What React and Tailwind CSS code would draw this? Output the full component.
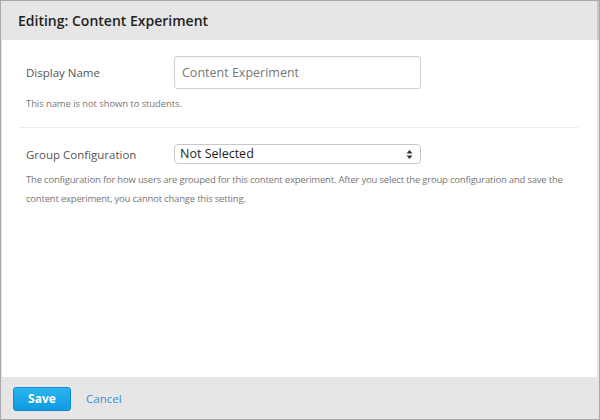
import React from "react"

export default function App() {
    return (
        <div
            className="w-[600px] h-[420px] border border-[#a8a8a8] bg-[#e6e6e6] flex flex-col text-[#555]"
            style={{ fontFamily: '"Open Sans", "Liberation Sans", sans-serif' }}
        >
            {/* Header */}
            <div className="h-[39px] flex items-center px-[17px] border-r-[2px] border-[#c8c8c8]">
                <h2 className="text-[14px] font-semibold text-[#222]">Editing: Content Experiment</h2>
            </div>

            {/* Body */}
            <div className="flex-1 bg-white ml-px mr-[2px] px-[17px] pt-[16px]">
                <div className="px-[7px]">
                    <div className="flex items-center">
                        <label className="w-[148px] text-[11.5px] text-[#555]">Display Name</label>
                        <input
                            readOnly
                            value="Content Experiment"
                            className="w-[247px] h-[33px] rounded-[3px] border border-[#d0d0d0] px-[7px] text-[12.5px] text-[#777] shadow-[inset_0_1px_2px_rgba(0,0,0,0.06)] outline-none"
                            style={{ fontFamily: '"Open Sans", "Liberation Sans", sans-serif' }}
                        />
                    </div>
                    <p className="mt-[8px] text-[9.5px] tracking-[-0.1px] text-[#777]">This name is not shown to students.</p>
                </div>

                <div className="mt-[16px] h-px bg-[#ececec] mr-[2px]" />

                <div className="px-[7px] pt-[16px]">
                    <div className="flex items-center">
                        <label className="w-[148px] text-[11.5px] text-[#555]">Group Configuration</label>
                        <div className="w-[247px] h-[20px] rounded-[4px] border border-[#c8c8c8] flex items-center justify-between pl-[5px] pr-[7px] bg-white">
                            <span className="text-[12.5px] text-[#222]">Not Selected</span>
                            <svg width="7" height="11" viewBox="0 0 7 11">
                                <path d="M3.5 1 L6.5 4.5 H0.5 Z" fill="#333" />
                                <path d="M3.5 10 L6.5 6.5 H0.5 Z" fill="#333" />
                            </svg>
                        </div>
                    </div>
                    <p className="mt-[6px] text-[9.5px] leading-[19px] tracking-[-0.2px] text-[#777]">
                        The configuration for how users are grouped for this content experiment. After you select the group configuration and save the content experiment, you cannot change this setting.
                    </p>
                </div>
            </div>

            {/* Footer */}
            <div className="h-[42px] flex items-center px-[12px] gap-[15px] pt-[2px]">
                <button className="w-[58px] h-[24px] rounded-[3px] border border-[#0f8ad0] bg-gradient-to-b from-[#2ab4f0] to-[#0f9ae0] text-white text-[12px] font-bold">
                    Save
                </button>
                <a className="text-[11.5px] text-[#3b8fd6]">Cancel</a>
            </div>
        </div>
    )
}
